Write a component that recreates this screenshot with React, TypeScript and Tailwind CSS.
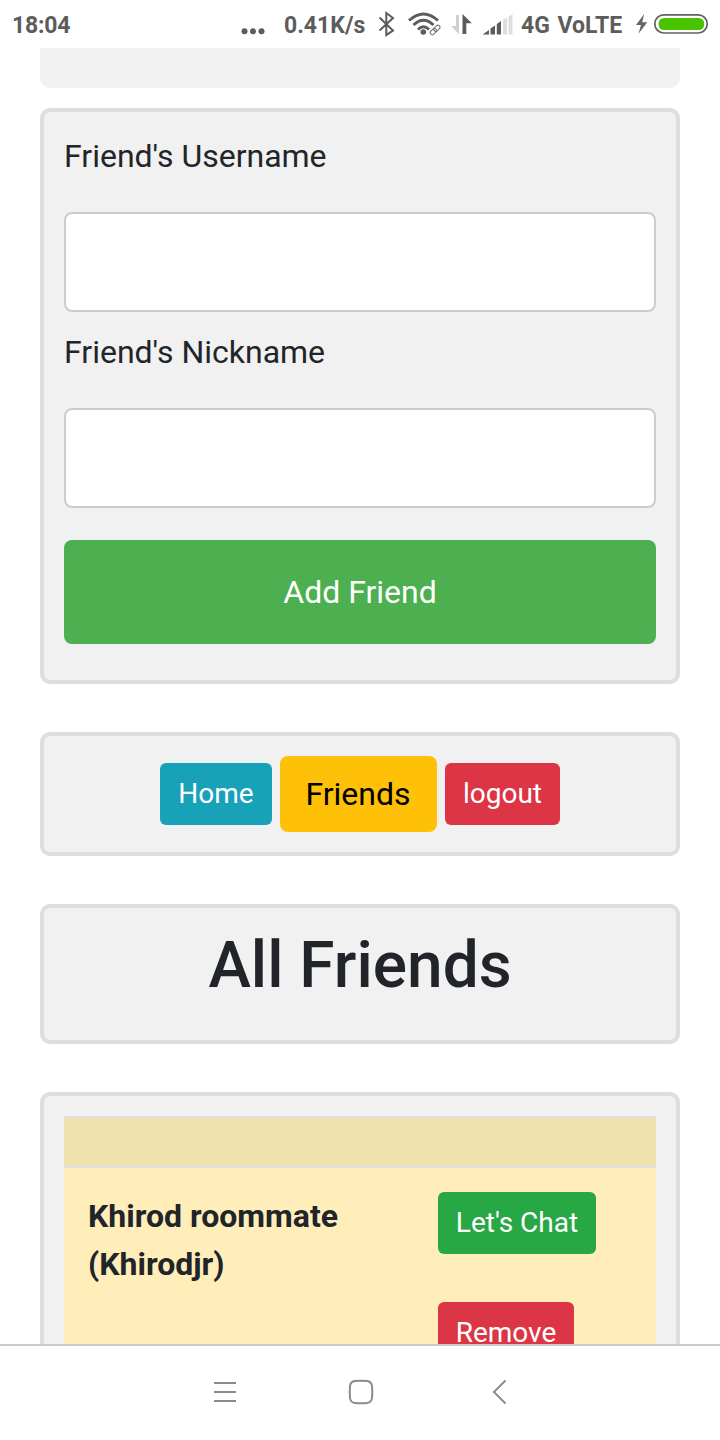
import type { ReactNode } from "react";

function Card({ className, children }: { className: string; children?: ReactNode }) {
  return (
    <section className={`shrink-0 rounded-[10px] border-4 border-[#dedede] bg-[#f1f1f1] p-5 ${className}`}>
      {children}
    </section>
  );
}

function StatusBar() {
  return (
    <header className="flex h-12 shrink-0 items-center bg-white pl-3 text-[23px] leading-[48px] font-bold text-[#5c5c5c]">
      <span className="w-[229px] pt-[3px] tracking-[-0.2px]">18:04</span>
      <svg className="h-12 w-[43px] shrink-0" viewBox="241 0 43 48" fill="#5c5c5c">
        <circle cx="244.5" cy="31.3" r="3" />
        <circle cx="253" cy="31.3" r="3" />
        <circle cx="261.5" cy="31.3" r="3" />
      </svg>
      <span className="w-[86px] shrink-0 pt-[3px] whitespace-nowrap">0.41K/s</span>
      <svg className="h-12 w-[151px] shrink-0" viewBox="370 0 151 48" fill="none" stroke="#5c5c5c">
        <path d="M379.5 17.5L393 30.5L386.3 35V13L393 18L379.5 30.5" strokeWidth="2" />
        <g strokeWidth="3">
          <path d="M409 20.5Q423.5 7.5 438 20.5" />
          <path d="M413.5 25Q423.5 15.5 433.5 25" />
          <path d="M418 29.5Q423.5 24 429 29.5" />
        </g>
        <circle cx="423.3" cy="32" r="2.8" fill="#5c5c5c" stroke="none" />
        <path d="M427.5 32L437 22.5L442 28L433 37z" fill="white" stroke="none" />
        <g transform="rotate(-43 435 30)" strokeWidth="1.1" stroke="#777777">
          <rect x="429.2" y="27.9" width="7" height="4.2" rx="2.1" />
          <rect x="434" y="27.9" width="7" height="4.2" rx="2.1" />
        </g>
        <g stroke="none">
          <path d="M456 15h3v19L451 26h5z" fill="#cfcfcf" />
          <path d="M462.5 14L471.8 23.3H466.3V34H462.5z" fill="#5c5c5c" />
          <path d="M482.5 34.5L489 30V34.5z" fill="#5c5c5c" />
          <path d="M490.5 28.5L495 25.5V34.5H490.5z" fill="#5c5c5c" />
          <path d="M496.8 24L501 21V34.5H496.8z" fill="#5c5c5c" />
          <path d="M503 19.8L507 17.5V34.5H503z" fill="#dedede" />
          <path d="M508.5 16.5L512.5 14V34.5H508.5z" fill="#dedede" />
        </g>
      </svg>
      <span className="w-[114px] shrink-0 pt-[3px] whitespace-nowrap [word-spacing:2px]">4G VoLTE</span>
      <svg className="h-12 w-[85px] shrink-0" viewBox="635 0 85 48">
        <path d="M644.2 14L636 25H641L638.5 33.8L647.3 22.3H642.2z" fill="#666666" />
        <rect x="654.8" y="14.8" width="52.4" height="18.2" rx="9.1" fill="white" stroke="#606060" strokeWidth="1.7" />
        <rect x="658.6" y="18" width="45.6" height="12" rx="5.5" fill="#49c300" />
      </svg>
    </header>
  );
}

function NavigationBar() {
  return (
    <footer className="h-24 shrink-0 border-t-2 border-[#cacaca] bg-white">
      <svg className="h-[94px] w-full" viewBox="0 1346 720 94" fill="none" stroke="#8b8b8b" strokeWidth="2">
        <path d="M214 1383H236M214 1392H236M214 1401H236" />
        <path d="M355 1381Q361 1380.4 367 1381Q371.5 1381.5 372 1386Q372.6 1392 372 1398Q371.5 1402.5 367 1403Q361 1403.6 355 1403Q350.5 1402.5 350 1398Q349.4 1392 350 1386Q350.5 1381.5 355 1381Z" />
        <path d="M505.5 1380.5L494 1392L505.5 1403.5" />
      </svg>
    </footer>
  );
}

function Field({ id, label }: { id: string; label: string }) {
  return (
    <>
      <label htmlFor={id} className="block text-[32px] leading-[48px]">{label}</label>
      <input id={id} className="mt-8 mb-4 block h-[100px] w-full rounded-[8px] border-2 border-[#cccccc] bg-white px-5 text-[32px] outline-none" />
    </>
  );
}

export default function App() {
  return (
    <div className="flex h-[1440px] w-[720px] flex-col overflow-hidden bg-white font-['Roboto',sans-serif] text-[#212529]">
      <StatusBar />
      <main className="flex min-h-0 flex-1 flex-col overflow-hidden px-10">
        <div className="h-10 shrink-0 rounded-b-[10px] bg-[#f1f1f1]" />
        <Card className="mt-5 h-[576px]">
          <Field id="username" label="Friend's Username" />
          <Field id="nickname" label="Friend's Nickname" />
          <button className="mt-4 h-[104px] w-full rounded-[8px] bg-[#4caf50] text-[32px] text-white">Add Friend</button>
        </Card>
        <Card className="mt-12 flex h-[124px] items-center justify-center gap-2">
          <button className="h-[62px] w-[112px] rounded-[6px] bg-[#17a2b8] pb-px text-[28px] text-white">Home</button>
          <button className="h-[76px] w-[157px] rounded-[8px] bg-[#ffc107] pr-px text-[32px] text-black">Friends</button>
          <button className="h-[62px] w-[115px] rounded-[6px] bg-[#dc3545] pb-px text-[28px] text-white">logout</button>
        </Card>
        <Card className="mt-12 h-[140px]">
          <h1 className="text-center text-[64px] leading-[76.8px] font-medium">All Friends</h1>
        </Card>
        <Card className="mt-12 h-[440px]">
          <div className="h-[50px] border-t-2 border-[#dee2e6] bg-[#f1e1ae]" />
          <div className="flex h-[340px] border-t-2 border-[#dee2e6] bg-[#ffeeba] p-6">
            <div className="w-[350px] shrink-0 text-[32px] leading-[48px] font-bold">
              Khirod roommate
              <br />
              (Khirodjr)
            </div>
            <div className="flex flex-col items-start gap-12">
              <button className="h-[62px] w-[158px] rounded-[6px] bg-[#28a745] pb-px text-[28px] text-white">Let's Chat</button>
              <button className="h-[62px] w-[136px] rounded-[6px] bg-[#dc3545] pb-px text-[28px] text-white">Remove</button>
            </div>
          </div>
        </Card>
      </main>
      <NavigationBar />
    </div>
  );
}
